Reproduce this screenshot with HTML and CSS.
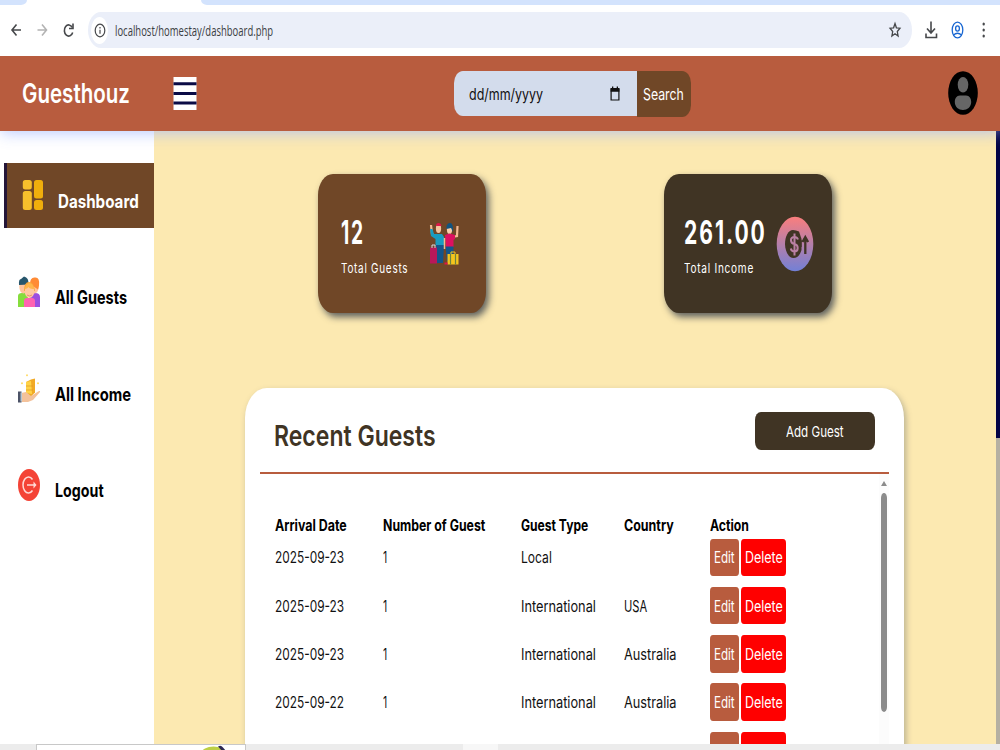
FILE: index.html
```html
<!DOCTYPE html>
<html lang="en">
<head>
<meta charset="utf-8">
<title>Guesthouz</title>
<link rel="stylesheet" href="styles.css">
</head>
<body>
<div class="tabs"><div class="tab-left"></div><div class="tab"></div><div class="tab-right"></div></div>
<div class="toolbar">
  <svg class="nav-icons" width="80" height="50" viewBox="0 0 80 50" fill="none" stroke="#46484b" stroke-width="1.6">
    <path d="M21 25H12.5M16.5 19.5L12 25l4.500 5.500"/>
    <path stroke="#b3b3b3" d="M37.500 25H46M42 19.500L46.500 25 42 30.500"/>
    <path d="M72.300 22.500A4.300 5.600 0 1 0 72.700 27.500"/><path d="M73 18.500v5h-4" />
  </svg>
  <div class="address">
    <span class="info"><svg width="12" height="15" viewBox="0 0 12 15" fill="none" stroke="#46484b" stroke-width="1.2"><ellipse cx="6" cy="7.500" rx="4.800" ry="6.300"/><path d="M6 6.700v4M6 4v1.500"/></svg></span>
    <span class="fit url" data-w="158"><span>localhost/homestay/dashboard.php</span></span>
    <svg class="star" width="14" height="18" viewBox="0 0 14 18" fill="none" stroke="#46484b" stroke-width="1.300"><path d="M7 2.500l1.400 4.300 3.600.4-2.700 3.300.8 4.500L7 12.800 3.900 15l.8-4.500L2 7.200l3.600-.4z"/></svg>
  </div>
  <svg width="88" height="50" viewBox="912 5 88 50" fill="none" stroke="#46484b" stroke-width="1.600">
    <path d="M931 21.500v11M927 28.500l4 4.500 4-4.500M926 33.500v4h10.500v-4"/>
    <g stroke="#1967d2" stroke-width="1.300"><ellipse cx="957.500" cy="30" rx="5.300" ry="7.800"/><ellipse cx="957.500" cy="28.500" rx="1.900" ry="2.600"/><path d="M953.500 35q4-3.500 8 0"/></g>
    <g fill="#46484b" stroke="none"><ellipse cx="983.700" cy="24" rx="1.200" ry="1.500"/><ellipse cx="983.700" cy="30" rx="1.200" ry="1.500"/><ellipse cx="983.700" cy="36" rx="1.200" ry="1.500"/></g>
  </svg>
</div>
<header class="header">
  <span class="fit logo" data-w="108"><span>Guesthouz</span></span>
  <svg class="menu" width="24" height="33" viewBox="0 0 24 33"><path fill="#fff" d="M.5 0h23v33H.5z"/><path fill="#0b0b45" d="M.5 5.200h23v3H.5zM.5 14.900h23v3H.5zM.5 24.600h23v3H.5z"/></svg>
  <div class="search">
    <div class="date"><span class="fit date-text" data-w="74"><span>dd/mm/yyyy</span></span>
      <svg width="10" height="16" viewBox="0 0 10 16"><path fill="none" stroke="#111" stroke-width="1.200" d="M1.100 3h7.800v11H1.100z"/><path fill="#111" d="M.6 2h8.800v3.800H.6zM2 .5h1.300V3H2zM6.700.5H8V3H6.700z"/></svg>
    </div>
    <div class="search-btn"><span class="fit" data-w="41"><span>Search</span></span></div>
  </div>
  <svg class="avatar" width="30" height="44" viewBox="0 0 30 44"><ellipse cx="15" cy="22" rx="14.800" ry="21.800"/><g fill="#666"><ellipse cx="15" cy="13.700" rx="5.300" ry="7.700"/><path d="M12 24.500h6c3.500 0 5.200 3 5.200 6.500 0 5-4 8-8.200 8s-8.200-3-8.200-8c0-3.500 1.700-6.500 5.200-6.500z"/></g></svg>
</header>
<div class="body">
  <nav class="side">
    <div class="item active">
      <svg width="22" height="32" viewBox="0 0 22 32"><g fill="#f7c02c"><rect x=".8" y="1" width="9" height="9.500" rx="2.500"/><rect x=".8" y="12" width="9" height="19" rx="2.500"/></g><g fill="#f0ae0c"><rect x="12" y="1" width="9" height="18.500" rx="2.500"/><rect x="12" y="21" width="9" height="10" rx="2.500"/></g></svg>
      <span class="fit" data-w="81"><span>Dashboard</span></span>
    </div>
    <div class="item">
      <svg width="22" height="32" viewBox="0 0 22 32"><path fill="#86dd3d" d="M0 31V20q0-3 4-3h6v14z"/><path fill="#9b4fe0" d="M12 31V17h5q5 0 5 4v10z"/><ellipse cx="5.500" cy="11" rx="4.200" ry="6.500" fill="#ffc39b"/><path fill="#27566c" d="M1 9q-.5-6 2-6l3-2.500q5 1 4.500 8z"/><ellipse cx="16.500" cy="11" rx="4.200" ry="6.500" fill="#ffc39b"/><path fill="#ff8b35" d="M12 8q0-7 5-6.500 5-.5 4 8l-1 4z"/><path fill="#ff62b1" d="M6 31v-6q0-3 3-3h5q3 0 3 3v6z"/><path fill="#f8a73a" d="M6 15q0-9 5-9t6 9z"/><ellipse cx="11.500" cy="15.500" rx="4.800" ry="6.500" fill="#ffc9a0"/><path fill="#ffb64c" d="M6.500 13q2-6 5-6t5 6q-5 0-6-2-1 2-4 2z"/><path d="M9 19q2.500 2 5 0" fill="none" stroke="#d87865" stroke-width=".7"/></svg>
      <span class="fit" data-w="72"><span>All Guests</span></span>
    </div>
    <div class="item">
      <svg width="22" height="32" viewBox="0 0 22 32"><path fill="#f1aa25" d="M8 9l5-2.500 4-1v14l-4 4-5-2z"/><path fill="#ffd347" d="M8 9l5-1 1 13-6-1z"/><path d="M8 13h7m-7 4h7" stroke="#e09a20" stroke-width=".7"/><path fill="#f3c29b" d="M3 20l5-1 5 4 8-5q2-.5 1 1l-7 8-5 2H3z"/><path fill="#4c5367" d="M0 18.500h3.500v11H0z"/><path fill="#b3c6d4" d="M2.500 19.500H4v9H2.500z"/><path fill="#ffd347" d="M9 1l1 1.300-1 1.300-1-1.300zM4 9l1 1.300-1 1.300-1-1.300zM20 9l1 1.300-1 1.300-1-1.300z"/></svg>
      <span class="fit" data-w="76"><span>All Income</span></span>
    </div>
    <div class="item">
      <svg width="22" height="32" viewBox="0 0 22 32"><ellipse cx="11" cy="16" rx="11" ry="16" fill="#f44336"/><g fill="none" stroke="#ffd9d5" stroke-width="1.500"><path d="M14.500 10.500A5.500 8 0 1 0 14.500 21.500M9 16h8.500"/></g><path fill="#ffd9d5" d="M15.500 12.500L18.500 16l-3 3.500z"/></svg>
      <span class="fit" data-w="48.500"><span>Logout</span></span>
    </div>
  </nav>
  <main class="main">
    <section class="cards">
      <div class="card brown">
        <div class="stat"><span class="fit num" data-w="24"><span>12</span></span><span class="fit label" data-w="67"><span>Total Guests</span></span></div>
        <svg width="30" height="42" viewBox="0 0 30 42"><path d="M2 2l1 9 5 3M28.500 3l-.5 10-5 1" fill="none" stroke="#f4b990" stroke-width="2.200"/><path fill="#1a9cc0" d="M1 6h2.500l1.500 5h8l2 3v9H6.500V16L2 13z"/><path fill="#14558a" d="M7 22h8l-1 18H8z"/><ellipse cx="9.500" cy="5.500" rx="2.600" ry="4.500" fill="#f4c39d"/><path fill="#dd1748" d="M7 3q0-3 2.500-3T12.500 3z"/><ellipse cx="20.500" cy="6.500" rx="2.600" ry="4.500" fill="#f7cda9"/><path fill="#12547f" d="M17.500 6V3q1-3 3.500-3t3 5v4l-2-4z"/><path fill="#dd1060" d="M16 12l4.500-1.500L26 12v4l-1.500 1v7H17z"/><path fill="#14558a" d="M16.500 23.500h8L24 38h-6z"/><path d="M15.500 15v11" stroke="#f4b990" stroke-width="1.500"/><path fill="#b9185a" d="M1 24.500h7v16H1z"/><path d="M3 25v-3h3v3" stroke="#d7d8e0" fill="none"/><path fill="#f4c51d" d="M18.500 31H29.500v10.500H18.500z"/><path d="M21.500 31v10.500m5-10.500v10.500" stroke="#6b8240" stroke-width="1.200"/><path d="M22 31v-2h4v2" fill="none" stroke="#f4c51d"/><path fill="#dd1748" d="M15.500 39.500h3V41.500h-3z"/></svg>
      </div>
      <div class="card dark">
        <div class="stat"><span class="fit num" data-w="83"><span>261.00</span></span><span class="fit label" data-w="70"><span>Total Income</span></span></div>
        <svg width="38" height="56" viewBox="0 0 38 56"><defs><linearGradient id="g" x2="0" y2="1"><stop offset="0" stop-color="#fa7e7d"/><stop offset="1" stop-color="#7280d6"/></linearGradient></defs><ellipse cx="19" cy="28" rx="18.300" ry="27.300" fill="url(#g)"/><path fill="#403424" d="M23 15.500q-3-1.500-6-1.500C12 14 9 21 9 28s3.500 14 8.500 14c4 0 6.500-3 8-8V23z"/><path d="M22 23.500q-1-2.500-3.500-2.500c-5 0-4.500 6 0 7s4 7.500 0 7.500q-3 0-3.700-3M18.500 17.500v22" fill="none" stroke="#ba80a3" stroke-width="2"/><path d="M29.300 38V22M26.500 26l2.800-5 2.800 5M24.500 31v-7" stroke="#403424" stroke-width="2.300" fill="none"/></svg>
      </div>
    </section>
    <section class="panel">
      <div class="panel-head"><span class="fit title" data-w="162"><span>Recent Guests</span></span><div class="add"><span class="fit" data-w="58"><span>Add Guest</span></span></div></div>
      <div class="list">
        <div class="table">
          <div class="row head"><span class="fit" data-w="72"><span>Arrival Date</span></span><span class="fit" data-w="102"><span>Number of Guest</span></span><span class="fit" data-w="67"><span>Guest Type</span></span><span class="fit" data-w="50"><span>Country</span></span><span class="fit" data-w="39"><span>Action</span></span></div>
          <div class="row"><span class="fit" data-w="69"><span>2025-09-23</span></span><span class="fit" data-w="4.500"><span>1</span></span><span class="fit" data-w="31"><span>Local</span></span><i></i><div class="actions"><b class="edit"><span class="fit" data-w="21"><span>Edit</span></span></b><b class="del"><span class="fit" data-w="37.500"><span>Delete</span></span></b></div></div>
          <div class="row"><span class="fit" data-w="69"><span>2025-09-23</span></span><span class="fit" data-w="4.500"><span>1</span></span><span class="fit" data-w="75"><span>International</span></span><span class="fit" data-w="23"><span>USA</span></span><div class="actions"><b class="edit"><span class="fit" data-w="21"><span>Edit</span></span></b><b class="del"><span class="fit" data-w="37.500"><span>Delete</span></span></b></div></div>
          <div class="row"><span class="fit" data-w="69"><span>2025-09-23</span></span><span class="fit" data-w="4.500"><span>1</span></span><span class="fit" data-w="75"><span>International</span></span><span class="fit" data-w="52.500"><span>Australia</span></span><div class="actions"><b class="edit"><span class="fit" data-w="21"><span>Edit</span></span></b><b class="del"><span class="fit" data-w="37.500"><span>Delete</span></span></b></div></div>
          <div class="row"><span class="fit" data-w="69"><span>2025-09-22</span></span><span class="fit" data-w="4.500"><span>1</span></span><span class="fit" data-w="75"><span>International</span></span><span class="fit" data-w="52.500"><span>Australia</span></span><div class="actions"><b class="edit"><span class="fit" data-w="21"><span>Edit</span></span></b><b class="del"><span class="fit" data-w="37.500"><span>Delete</span></span></b></div></div>
          <div class="row"><i></i><i></i><i></i><i></i><div class="actions"><b class="edit"></b><b class="del"></b></div></div>
        </div>
        <div class="scroll"><div class="arrow"></div><div class="thumb"></div></div>
      </div>
    </section>
  </main>
  <div class="page-scroll"><div class="page-thumb"></div></div>
</div>
<footer class="taskbar"><div class="task-search"><svg width="24" height="6" viewBox="0 0 24 6"><ellipse cx="11.500" cy="8" rx="12" ry="6.500" fill="#bdcf45"/><path fill="#2d2852" d="M16 1.500q3-2 5 1L24 6h-4z"/></svg></div><div class="task-active"></div></footer>
<script src="fit.js"></script>
</body>
</html>
```
FILE: styles.css
```css
* { box-sizing: border-box; }
body { margin: 0; width: 1000px; height: 750px; overflow: hidden; display: flex; flex-direction: column; background: #fff; font: 16px/20px Inter, "Liberation Sans", sans-serif; color: #111; }
svg { display: block; flex: none; }
.fit { display: block; flex: none; white-space: nowrap; }
.fit > span { display: inline-block; transform-origin: 0 50%; }

.tabs { height: 5px; flex: none; display: flex; background: #fff; }
.tab-left { width: 27px; background: #d3e3fd; border-bottom-right-radius: 6px 5px; }
.tab { width: 174px; }
.tab-right { flex: 1; background: #d3e3fd; border-bottom-left-radius: 6px 5px; }
.toolbar { height: 51px; flex: none; display: flex; background: #fff; position: relative; z-index: 3; }
.nav-icons { margin-right: 8px; }
.address { width: 824px; height: 36px; margin-top: 7px; border-radius: 13px / 18px; background: #ebeff9; display: flex; align-items: center; }
.info { width: 17px; height: 27px; margin-left: 3px; border-radius: 50%; background: #fff; display: flex; align-items: center; justify-content: center; }
.url { font: 14px/20px "Open Sans", sans-serif; color: #3c4043; margin-left: 7px; padding-top: 1px; }
.star { margin-left: auto; margin-right: 10px; }

.header { height: 75px; flex: none; display: flex; align-items: center; position: relative; z-index: 2; background: #b85c3e; box-shadow: 1px 1px 15px rgba(161, 182, 253, .825); padding: 0 22px; }
.logo { color: #fff; font-size: 27px; font-weight: 600; line-height: 34px; }
.menu { margin-left: 42.500px; }
.search { display: flex; margin-left: 257.500px; height: 46px; }
.date { width: 183px; height: 45px; padding: 2px 17px 0 15px; display: flex; align-items: center; justify-content: space-between; background: #d3dcec; border-radius: 9px 0 0 9px / 12px 0 0 12px; }
.date-text { font-size: 16px; }
.search-btn { width: 54px; padding-left: 6px; display: flex; align-items: center; color: #fff; font-size: 16.500px; background: #704727; border-radius: 0 9px 9px 0 / 0 12px 12px 0; }
.avatar { margin-left: auto; margin-bottom: 1px; }

.body { height: 612.500px; flex: none; display: flex; overflow: hidden; }
.side { width: 154px; flex: none; padding: 32.300px 0 0 4px; display: flex; flex-direction: column; gap: 32.200px; }
.item { height: 64.400px; flex: none; display: flex; align-items: center; gap: 15px; padding-left: 14px; font-size: 18.500px; font-weight: 700; color: #000; }
.item .fit { padding-top: 10.500px; }
.active { background: #704727; color: #fff; border-left: 3px solid #251638; padding-left: 15px; gap: 14px; }
.main { width: 842px; flex: none; background: #fce9b1; padding: 43px 0 0 91px; }
.cards { display: flex; gap: 178px; padding-left: 73px; }
.card { width: 168px; height: 139px; border-radius: 15px / 21px; display: flex; align-items: center; justify-content: space-between; color: #fff; box-shadow: 3px 4px 7px rgba(40, 50, 65, .75); }
.brown { background: #704727; padding: 0 27px 0 23px; }
.dark { background: #403424; padding: 0 18px 0 19.500px; }
.stat { width: 85px; padding-top: 3px; }
.num { font-size: 32px; line-height: 40px; font-weight: 700; letter-spacing: 3px; margin-bottom: 5px; }
.label { font-size: 13.500px; letter-spacing: 1px; }
.panel { width: 659px; height: 400px; margin-top: 75px; padding: 0 15px; background: #fff; border-radius: 22px 22px 0 0 / 30px 30px 0 0; box-shadow: 2px 3px 6px rgba(80, 90, 95, .4); }
.panel-head { height: 86px; border-bottom: 2px solid #b85c3e; display: flex; justify-content: space-between; padding: 24px 14px 0 14px; }
.title { font-size: 29px; line-height: 48px; font-weight: 600; color: #403424; }
.add { width: 120px; height: 38px; padding-top: 1px; border-radius: 6px / 8px; display: flex; align-items: center; justify-content: center; background: #403424; color: #fff; font-size: 15px; }
.list { display: flex; justify-content: space-between; padding-left: 15px; }
.table { width: 540px; padding-top: 40px; }
.row { display: grid; grid-template-columns: 108px 138px 103px 86px 90px; align-items: center; height: 37.500px; margin-bottom: 10.800px; }
.head { height: 24.500px; margin-bottom: 0; font-weight: 700; color: #000; font-size: 15.700px; }
.actions { display: flex; gap: 2px; }
.actions b { height: 37.500px; display: flex; align-items: center; justify-content: center; border-radius: 3px / 4px; color: #fff; font-weight: 400; }
.edit { width: 29px; background: #b85c3e; }
.del { width: 44.500px; background: #f00; }
.scroll { width: 10px; height: 280px; background: #fcfcfc; display: flex; flex-direction: column; align-items: center; padding-top: 7px; }
.arrow { border: 3.500px solid transparent; border-bottom: 5px solid #8b8b8b; border-top: 0; }
.thumb { width: 6px; height: 219px; margin-top: 7px; border-radius: 3px / 5px; background: #8b8b8b; }
.page-scroll { width: 4px; background: #b5b0a2; }
.page-thumb { height: 306.500px; background: #020244; }
.taskbar { flex: 1; display: flex; background: #ececec; }
.task-search { width: 210px; margin-left: 35.500px; padding-left: 165px; background: #fff; border: 1px solid #c8c8c8; border-bottom: 0; }
.task-active { width: 35px; margin-left: 217px; background: #f7f7f7; }
```
FILE: fit.js
```js
// Condense each label to its declared column width.
document.querySelectorAll('.fit').forEach(function (el) {
  var text = el.firstElementChild;
  var width = parseFloat(el.dataset.w);
  var natural = text.offsetWidth;
  el.style.width = width + 'px';
  text.style.transform = 'scaleX(' + width / natural + ')';
});
```
